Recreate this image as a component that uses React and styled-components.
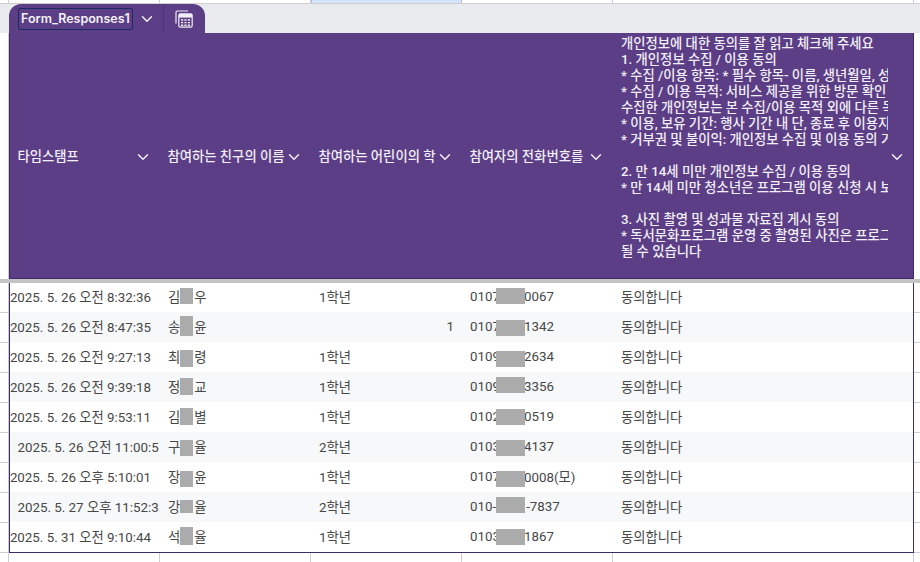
import React from "react";
import styled, { createGlobalStyle } from "styled-components";
import { ChevronDown } from "lucide-react";

const FONT = `Roboto, "Noto Sans CJK KR", sans-serif`;
const GRID_LINE = "#cfcfcf";
const PURPLE = "#5b3e85";
const EDGE = "#3f2a6b";
const BLOT = "#ababab";

const Global = createGlobalStyle`
  html, body { margin: 0; padding: 0; background: #fff; }
  body { font-family: ${FONT}; }
`;

const Page = styled.div`
  width: 920px;
  height: 562px;
  overflow: hidden;
  display: flex;
  flex-direction: column;
  background: #fff;
`;

const Ruler = styled.div`
  display: flex;
  flex: none;
  height: ${(p) => p.$height}px;
  box-sizing: border-box;
  border-bottom: ${(p) => (p.$ruled ? `1px solid ${GRID_LINE}` : "none")};
`;

const RulerCell = styled.div`
  flex: none;
  box-sizing: border-box;
  width: ${(p) => p.$width}px;
  background: ${(p) => (p.$selected ? "#d3e3fd" : "transparent")};
  border-right: 1px solid ${(p) => (p.$selected ? "#a9c1ea" : GRID_LINE)};
  border-left: ${(p) => (p.$selected ? "1px solid #a9c1ea" : "none")};
`;

const TabStrip = styled.div`
  flex: none;
  height: 29px;
  background: #e8eaed;
  padding-left: 9px;
  display: flex;
  align-items: stretch;
`;

const Tab = styled.div`
  width: 196px;
  background: ${PURPLE};
  border-radius: 12px 12px 0 0;
  display: flex;
  align-items: center;
  color: #fff;
`;

const NameBox = styled.div`
  box-sizing: border-box;
  width: 115px;
  height: 22px;
  margin-left: 9px;
  border: 1px solid #1e2b5e;
  border-radius: 2px;
  font: 600 12.5px Inter, sans-serif;
  line-height: 20px;
  padding-left: 2px;
  white-space: nowrap;
  overflow: hidden;
  color: #f4f1f8;
`;

const TabMenu = styled.div`
  width: 31px;
  height: 100%;
  box-sizing: border-box;
  border-right: 1px solid #4d3473;
  padding-right: 2px;
  display: flex;
  align-items: center;
  justify-content: center;
`;

const TabIcon = styled.div`
  flex: 1;
  display: flex;
  align-items: center;
  justify-content: center;
  padding-right: 1px;
`;

const Frame = styled.div`
  flex: none;
  display: flex;
`;

const Gutter = styled.div`
  flex: none;
  box-sizing: border-box;
  width: ${(p) => p.$width}px;
  border-right: ${(p) => (p.$left ? `1px solid ${GRID_LINE}` : "none")};
`;

const BodyGutter = styled(Gutter)`
  background-image: linear-gradient(${GRID_LINE} 1px, transparent 1px);
  background-size: 100% 30px;
  background-position: 0 29px;
`;

const HeaderGrid = styled.div`
  flex: none;
  width: 905px;
  height: 246px;
  box-sizing: border-box;
  display: grid;
  grid-template-columns: 150px 151px 151px 151px 300px;
  background: ${PURPLE};
  border-left: 1px solid ${EDGE};
  border-right: 1px solid ${EDGE};
  border-bottom: 1px solid ${EDGE};
`;

const HeaderCell = styled.div`
  display: flex;
  align-items: center;
  min-width: 0;
  box-sizing: border-box;
  padding: 3px 8px 0 7.5px;
  color: #f3eff8;
  font-size: 13.33px;
  font-weight: 500;
  line-height: 16px;
`;

const WideHeaderCell = styled(HeaderCell)`
  padding: 3px 7px 0 8px;
`;

const HeaderLabel = styled.div`
  flex: 1;
  min-width: 0;
  overflow: hidden;
  white-space: pre;
  align-self: ${(p) => (p.$long ? "flex-start" : "center")};
`;

const HeaderChevron = styled(ChevronDown)`
  flex: none;
  color: #f3eff8;
`;

const FreezeBar = styled.div`
  flex: none;
  height: 4px;
  background: #c4c4c4;
`;

const BodyGrid = styled.div`
  flex: none;
  width: 905px;
  box-sizing: border-box;
  border-left: 1px solid ${EDGE};
  border-right: 1px solid ${EDGE};
  border-bottom: 1px solid ${EDGE};
`;

const Row = styled.div`
  display: grid;
  grid-template-columns: 150px 151px 151px 151px 300px;
  height: 30px;
  background: ${(p) => (p.$alt ? "#f6f8f9" : "#fff")};
  &:first-child { height: 29px; }
`;

const Cell = styled.div`
  position: relative;
  display: flex;
  align-items: center;
  min-width: 0;
  box-sizing: border-box;
  padding: 0 8px 2px;
  justify-content: ${(p) => (p.$end ? "flex-end" : "flex-start")};
  color: #474747;
  font-size: 13.33px;
  white-space: nowrap;
  overflow: ${(p) => (p.$clip ? "hidden" : "visible")};
`;

const DateCell = styled(Cell)`
  padding-right: ${(p) => (p.$clip ? "0" : "9px")};
  padding-left: ${(p) => (p.$clip ? "7.5px" : "8px")};
`;

const NameGap = styled.span`
  display: inline-block;
  width: 14px;
`;

const PhoneGap = styled.span`
  display: inline-block;
  width: ${(p) => p.$width}px;
`;

const Blot = styled.span`
  position: absolute;
  left: ${(p) => p.$left}px;
  top: ${(p) => p.$top}px;
  width: ${(p) => p.$width}px;
  height: ${(p) => p.$height}px;
  background: ${BLOT};
`;

const SheetIcon = () => (
  <svg width="18" height="18" viewBox="0 0 18 18" fill="none" stroke="#f1edf6" strokeWidth="1.2">
    <path d="M1 13.5V2.2C1 1.5 1.5 1 2.2 1H13" />
    <rect x="3.8" y="3.8" width="13.4" height="13.4" rx="1.6" />
    <rect x="4" y="4" width="13" height="3.6" fill="#f1edf6" stroke="none" />
    <path d="M6 10h9M6 12.6h9M6 15.2h9" strokeWidth="1.4" strokeDasharray="2.2 1.2" />
  </svg>
);

const LONG_TEXT = [
  "개인정보에 대한 동의를 잘 읽고 체크해 주세요",
  "1. 개인정보 수집 / 이용 동의",
  "* 수집 /이용 항목: * 필수 항목- 이름, 생년월일, 성별",
  "* 수집 / 이용 목적: 서비스 제공을 위한 방문 확인 및",
  "수집한 개인정보는 본 수집/이용 목적 외에 다른 목적으로",
  "* 이용, 보유 기간: 행사 기간 내 단, 종료 후 이용지",
  "* 거부권 및 불이익: 개인정보 수집 및 이용 동의 거부",
  "",
  "2. 만 14세 미만 개인정보 수집 / 이용 동의",
  "* 만 14세 미만 청소년은 프로그램 이용 신청 시 보호자",
  "",
  "3. 사진 촬영 및 성과물 자료집 게시 동의",
  "* 독서문화프로그램 운영 중 촬영된 사진은 프로그램",
  "될 수 있습니다",
].join("\n");

const HEADERS = ["타임스탬프", "참여하는 친구의 이름", "참여하는 어린이의 학년", "참여자의 전화번호를"];

const ROWS = [
  { date: "2025. 5. 26 오전 8:32:36", n: ["김", "우"], nb: [5, 16], grade: "1학년", p: ["0107", "0067"], pb: 5 },
  { date: "2025. 5. 26 오전 8:47:35", n: ["송", "윤"], nb: [4, 20], num: "1", p: ["0107", "1342"], pb: 8 },
  { date: "2025. 5. 26 오전 9:27:13", n: ["최", "령"], nb: [8, 17], grade: "1학년", p: ["0109", "2634"], pb: 9 },
  { date: "2025. 5. 26 오전 9:39:18", n: ["정", "교"], nb: [6, 17], grade: "1학년", p: ["0109", "3356"], pb: 5 },
  { date: "2025. 5. 26 오전 9:53:11", n: ["김", "별"], nb: [6, 17], grade: "1학년", p: ["0102", "0519"], pb: 7 },
  { date: "2025. 5. 26 오전 11:00:5", clip: true, n: ["구", "율"], nb: [8, 16], grade: "2학년", p: ["0103", "4137"], pb: 8 },
  { date: "2025. 5. 26 오후 5:10:01", n: ["장", "윤"], nb: [9, 16], grade: "1학년", p: ["0107", "0008(모)"], pb: 9 },
  { date: "2025. 5. 27 오후 11:52:3", clip: true, n: ["강", "율"], nb: [8, 13], grade: "2학년", p: ["010-", "-7837"], pb: 5, gap: 30 },
  { date: "2025. 5. 31 오전 9:10:44", n: ["석", "율"], nb: [5, 18], grade: "1학년", p: ["0103", "1867"], pb: 7 },
];

export default function App() {
  return (
    <Page>
      <Global />
      <Ruler $height={4} $ruled>
        <RulerCell $width={9} />
        <RulerCell $width={151} />
        <RulerCell $width={151} />
        <RulerCell $width={151} $selected />
        <RulerCell $width={151} />
        <RulerCell $width={301} />
      </Ruler>
      <TabStrip>
        <Tab>
          <NameBox>Form_Responses1</NameBox>
          <TabMenu>
            <ChevronDown size={18} strokeWidth={2} color="#f3eff8" />
          </TabMenu>
          <TabIcon>
            <SheetIcon />
          </TabIcon>
        </Tab>
      </TabStrip>
      <Frame>
        <Gutter $width={9} $left />
        <HeaderGrid>
          {HEADERS.map((h) => (
            <HeaderCell key={h}>
              <HeaderLabel>{h}</HeaderLabel>
              <HeaderChevron size={18} strokeWidth={2} />
            </HeaderCell>
          ))}
          <WideHeaderCell>
            <HeaderLabel $long>{LONG_TEXT}</HeaderLabel>
            <HeaderChevron size={18} strokeWidth={2} />
          </WideHeaderCell>
        </HeaderGrid>
        <Gutter $width={6} />
      </Frame>
      <FreezeBar />
      <Frame>
        <BodyGutter $width={9} $left />
        <BodyGrid>
          {ROWS.map((r, i) => (
            <Row key={r.date} $alt={i % 2 === 1}>
              <DateCell $end={!r.clip} $clip={r.clip}>{r.date}</DateCell>
              <Cell>
                {r.n[0]}
                <NameGap />
                {r.n[1]}
                <Blot $left={20} $top={r.nb[0]} $width={13} $height={r.nb[1]} />
              </Cell>
              <Cell $end={!!r.num}>{r.grade || r.num}</Cell>
              <Cell>
                {r.p[0]}
                <PhoneGap $width={r.gap || 24} />
                {r.p[1]}
                <Blot $left={34} $top={r.pb} $width={29} $height={16} />
              </Cell>
              <Cell>동의합니다</Cell>
            </Row>
          ))}
        </BodyGrid>
        <BodyGutter $width={6} />
      </Frame>
      <Ruler $height={10}>
        <RulerCell $width={9} />
        <RulerCell $width={151} />
        <RulerCell $width={151} />
        <RulerCell $width={151} />
        <RulerCell $width={151} />
        <RulerCell $width={301} />
      </Ruler>
    </Page>
  );
}
